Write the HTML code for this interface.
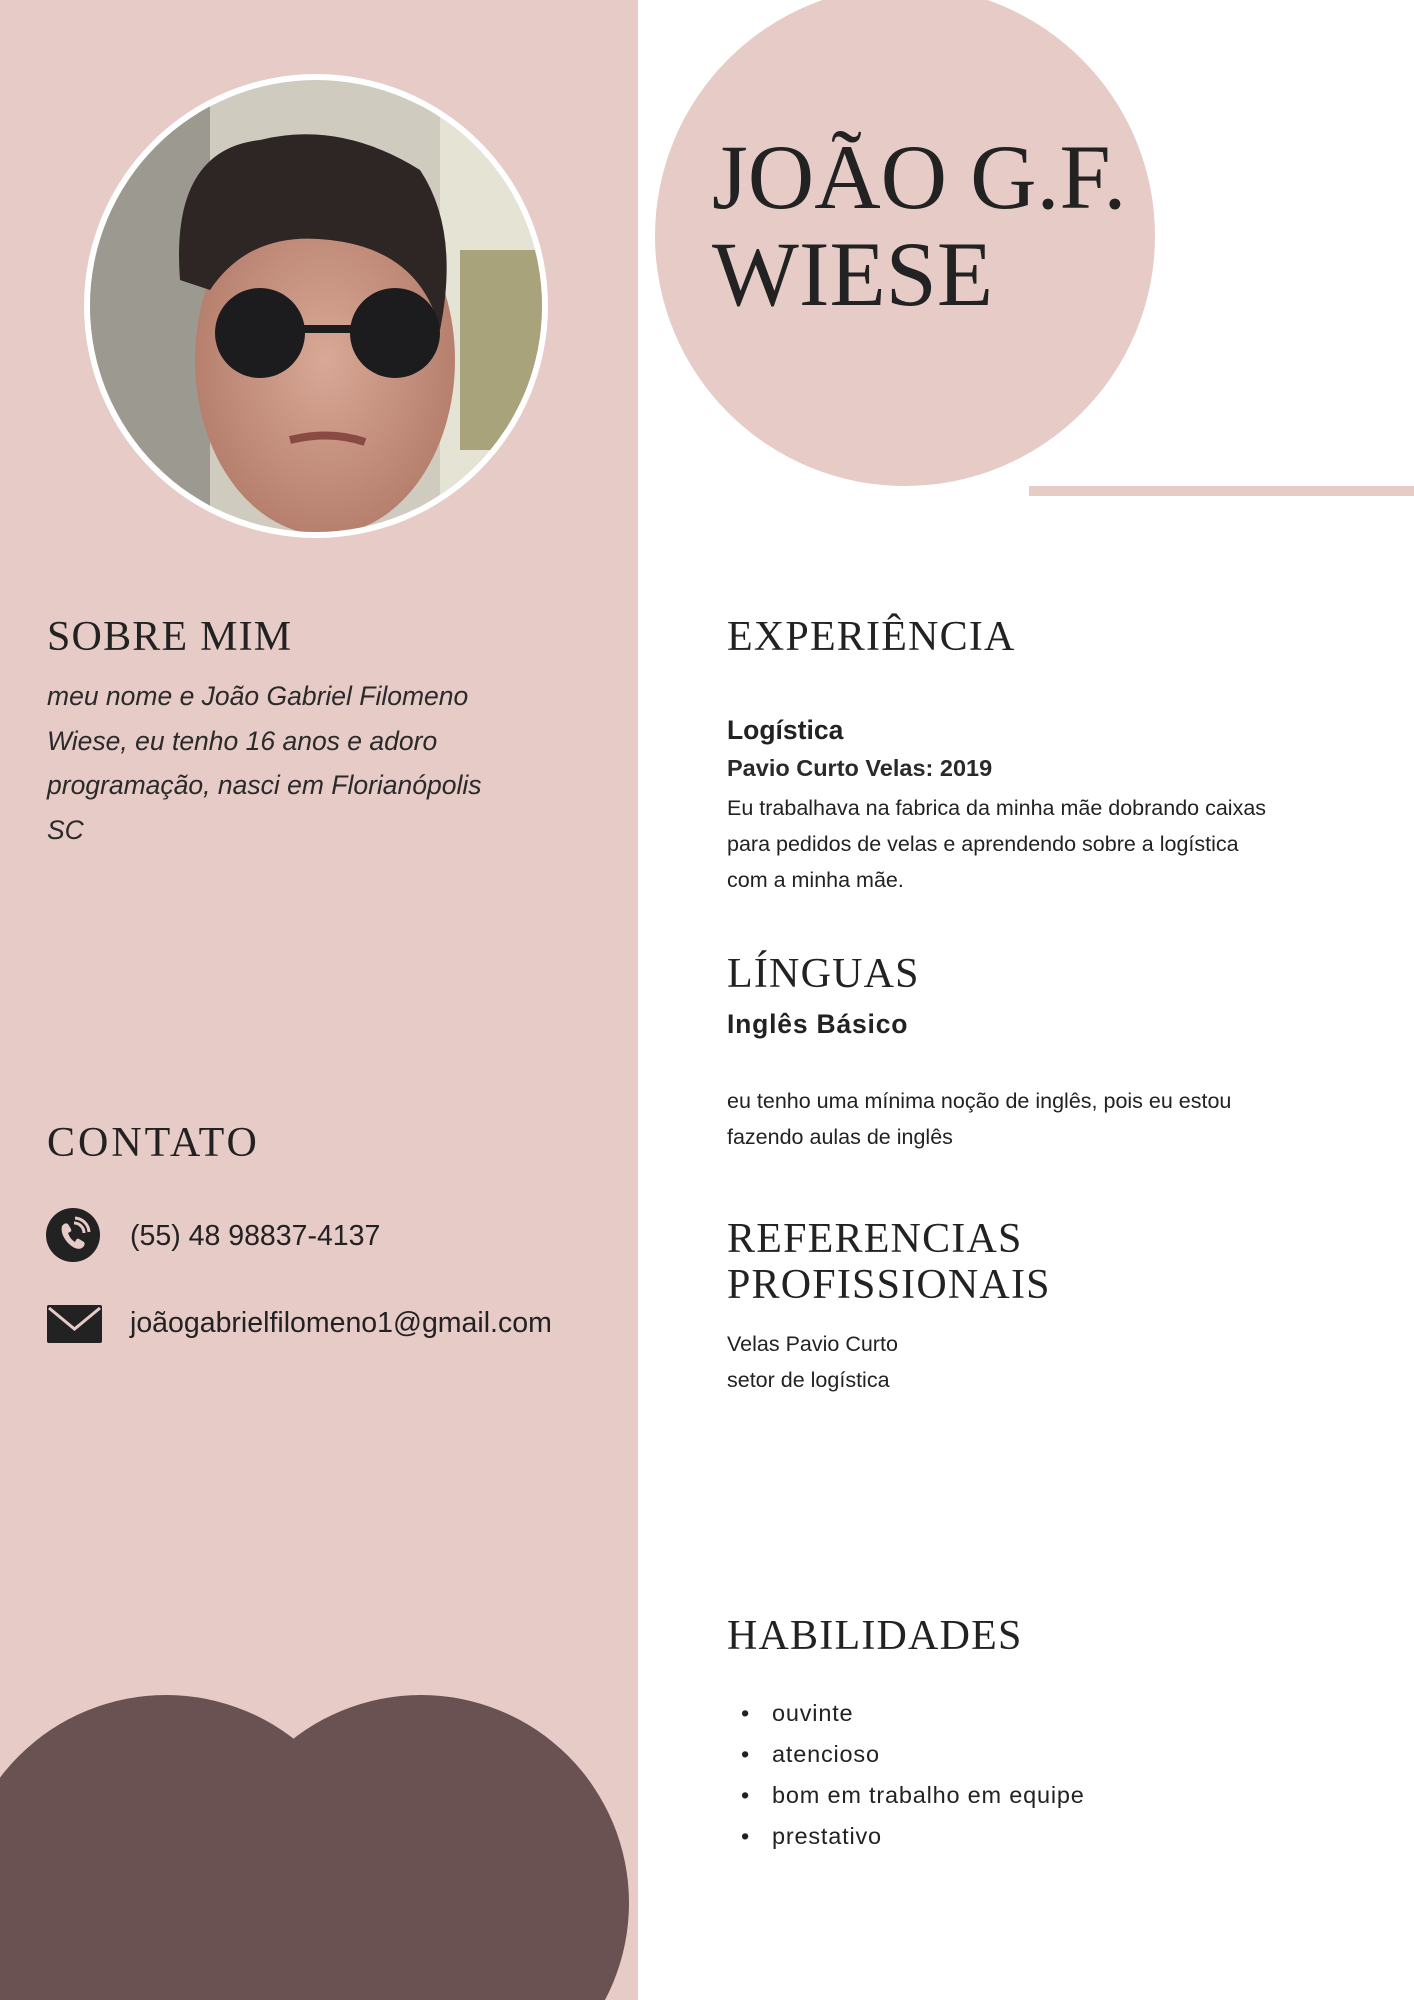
<!DOCTYPE html>
<html><head><meta charset="utf-8"><style>
*{margin:0;padding:0;box-sizing:border-box}
html{width:1414px;height:2000px;overflow:hidden}
body{width:1414px;height:2000px;position:relative;background:#fff;overflow:hidden;font-family:"Liberation Sans",sans-serif;color:#222}
.abs{position:absolute;white-space:nowrap}
svg{overflow:hidden;display:block}
.h{font-family:"Liberation Serif",serif;font-size:42px;letter-spacing:1.2px;color:#222;line-height:1}
.b{font-size:21.5px;line-height:36px}
</style></head><body>
<div class="abs" style="left:0;top:0;width:638px;height:2000px;background:#e6cbc7"></div>
<svg class="abs" style="left:0;top:1690px" width="638" height="310" viewBox="0 1690 638 310">
<circle cx="166" cy="1903" r="208" fill="#6b5252"/>
<circle cx="421" cy="1903" r="208" fill="#6b5252"/>
</svg>
<svg class="abs" style="left:0;top:0" width="638" height="560">
<defs><clipPath id="c"><circle cx="316" cy="306" r="226"/></clipPath>
<radialGradient id="f" cx="0.5" cy="0.5" r="0.5"><stop offset="0" stop-color="#d9a896"/><stop offset="1" stop-color="#b7806e"/></radialGradient></defs>
<circle cx="316" cy="306" r="232" fill="#fff"/>
<g clip-path="url(#c)">
<rect x="80" y="70" width="480" height="480" fill="#cfcbbf"/>
<rect x="80" y="70" width="130" height="480" fill="#9c9a90"/>
<rect x="440" y="70" width="120" height="480" fill="#e5e3d4"/>
<rect x="460" y="250" width="100" height="200" fill="#a8a37a"/>
<ellipse cx="325" cy="360" rx="130" ry="175" fill="url(#f)"/>
<path d="M180 280 Q170 150 260 140 Q340 120 420 170 Q460 230 440 330 Q420 250 330 240 Q250 230 210 290 Z" fill="#2e2624"/>
<circle cx="260" cy="333" r="45" fill="#1c1c1e"/>
<circle cx="395" cy="333" r="45" fill="#1c1c1e"/>
<rect x="300" y="325" width="60" height="8" fill="#1c1c1e"/>
<path d="M290 440 Q330 430 365 442" stroke="#8a4a44" stroke-width="8" fill="none"/>
</g>
</svg>
<svg class="abs" style="left:0;top:0" width="1414" height="500">
<circle cx="905" cy="236" r="250" fill="#e6cbc7"/>
<rect x="1029" y="486" width="385" height="10" fill="#e6cbc7"/>
</svg>
<div class="abs" style="left:712px;top:129px;font-family:'Liberation Serif',serif;font-size:92px;line-height:97px;color:#222">JOÃO G.F.<br>WIESE</div>

<div class="abs h" style="left:47px;top:616px">SOBRE MIM</div>
<div class="abs" style="left:47px;top:674px;font-style:italic;font-size:26.5px;line-height:44.5px;color:#2a2a2a">meu nome e João Gabriel Filomeno<br>Wiese, eu tenho 16 anos e adoro<br>programação, nasci em Florianópolis<br>SC</div>

<div class="abs h" style="left:47px;top:1122px;letter-spacing:3px">CONTATO</div>
<svg class="abs" style="left:45px;top:1207px" width="56" height="56"><circle cx="28" cy="28" r="27" fill="#222"/>
<path d="M17 19 q3-4 6-2 l3 5 q1 2-1 3 l-2 1 q2 6 7 9 l1-2 q1-2 3-1 l5 3 q2 3-2 6 q-6 3-14-5 q-8-9-6-17z" fill="#e6cbc7"/>
<path d="M29 16 a10 10 0 0 1 10 10 M30 11 a15 15 0 0 1 14 14" stroke="#e6cbc7" stroke-width="3" fill="none"/></svg>
<div class="abs" style="left:130px;top:1220px;font-size:28.5px;color:#222">(55) 48 98837-4137</div>
<svg class="abs" style="left:47px;top:1305px" width="55" height="38"><rect width="55" height="38" rx="2" fill="#222"/><path d="M2 3 L27.5 24 L53 3" stroke="#e6cbc7" stroke-width="3" fill="none"/></svg>
<div class="abs" style="left:130px;top:1307px;font-size:28.5px;color:#222">joãogabrielfilomeno1@gmail.com</div>

<div class="abs h" style="left:727px;top:616px">EXPERIÊNCIA</div>
<div class="abs" style="left:727px;top:715px;font-size:26.5px;font-weight:bold">Logística</div>
<div class="abs" style="left:727px;top:755px;font-size:23.5px;font-weight:bold;color:#2a2a2a">Pavio Curto Velas: 2019</div>
<div class="abs b" style="left:727px;top:790px">Eu trabalhava na fabrica da minha mãe dobrando caixas<br>para pedidos de velas e aprendendo sobre a logística<br>com a minha mãe.</div>

<div class="abs h" style="left:727px;top:953px">LÍNGUAS</div>
<div class="abs" style="left:727px;top:1009px;font-size:26.5px;font-weight:bold;letter-spacing:0.8px">Inglês Básico</div>
<div class="abs b" style="left:727px;top:1083px">eu tenho uma mínima noção de inglês, pois eu estou<br>fazendo aulas de inglês</div>

<div class="abs h" style="left:727px;top:1216px;line-height:46px">REFERENCIAS<br>PROFISSIONAIS</div>
<div class="abs b" style="left:727px;top:1326px">Velas Pavio Curto<br>setor de logística</div>

<div class="abs h" style="left:727px;top:1615px">HABILIDADES</div>
<div class="abs" style="left:741px;top:1693px;font-size:23.5px;line-height:41px;letter-spacing:0.8px">
<div>•&nbsp;&nbsp;&nbsp;ouvinte</div><div>•&nbsp;&nbsp;&nbsp;atencioso</div><div>•&nbsp;&nbsp;&nbsp;bom em trabalho em equipe</div><div>•&nbsp;&nbsp;&nbsp;prestativo</div></div>
</body></html>
